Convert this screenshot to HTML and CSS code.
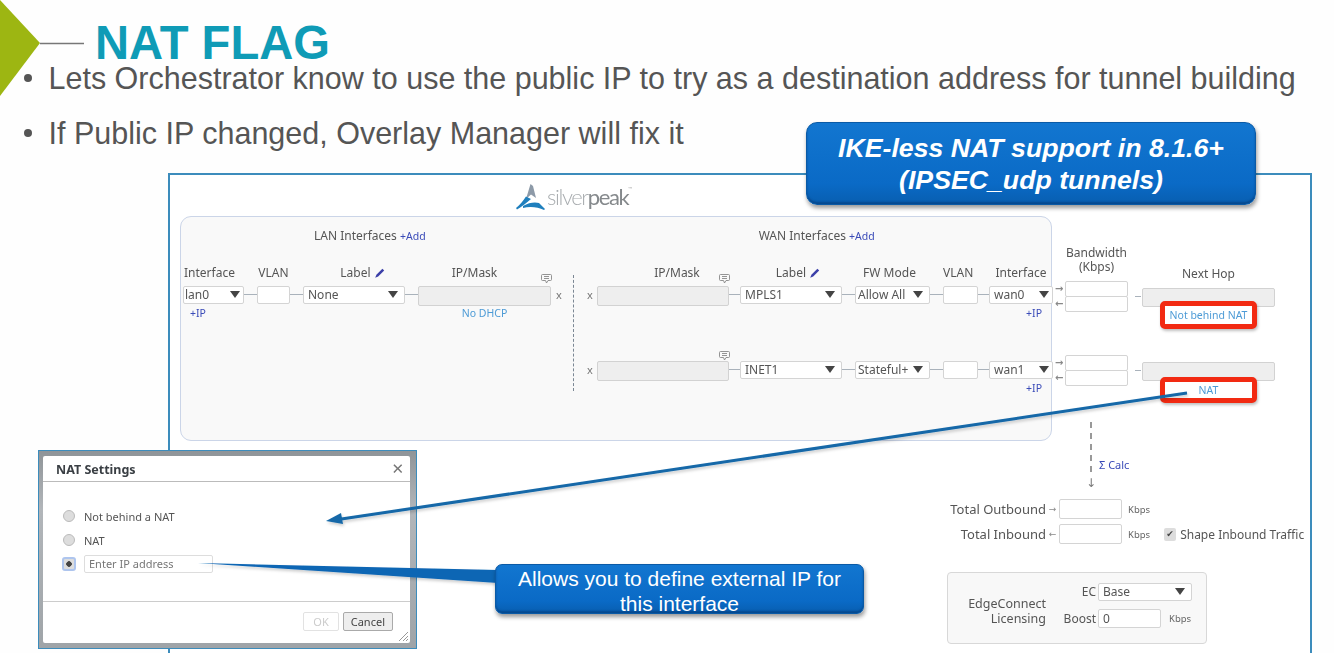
FILE: index.html
```html
<!DOCTYPE html>
<html lang="en">
<head>
<meta charset="utf-8">
<title>NAT Flag</title>
<link rel="stylesheet" href="styles.css">
</head>
<body>
<main class="slide">
  <svg class="marker" viewBox="0 0 90 96" width="90" height="96" aria-hidden="true">
    <polygon points="0,0 40,43 0,96" fill="#9db612"/>
    <line x1="40" y1="43.5" x2="84" y2="43.5" stroke="#777" stroke-width="1.4"/>
  </svg>
  <h1 class="title">NAT FLAG</h1>
  <ul class="bullets">
    <li>Lets Orchestrator know to use the public IP to try as a destination address for tunnel building</li>
    <li>If Public IP changed, Overlay Manager will fix it</li>
  </ul>

  <section class="panel">
    <div class="logo">
      <svg viewBox="0 0 30 26" width="30" height="26" aria-hidden="true">
        <path d="M14.500 0 L17 2 L20 14 L15 10.500 L10 15 Z" fill="#8d9aa8"/>
        <path d="M10 12.500 L15 15 C10 19 6 23 1 25.500 L0 24 C4 21 7 17 10 12.500 Z" fill="#1f7fbd"/>
        <path d="M7 22 C13 18 20 18 23 19 L29 25 L28 26 C22 23 14 22 7 24 Z" fill="#1f7fbd"/>
      </svg>
      <span class="logo-name"><span class="logo-light">silver</span><span class="logo-dark">peak</span><sup class="logo-tm">™</sup></span>
    </div>

    <div class="config">
      <div class="ifbox">
        <div class="iftitles">
          <span class="lan-title">LAN Interfaces <b class="add">+Add</b></span>
          <span class="wan-title">WAN Interfaces <b class="add">+Add</b></span>
        </div>

        <div class="ifrow labels">
          <span class="lb-if">Interface</span><i></i><span>VLAN</span><i></i>
          <span class="lb-label1">Label <svg class="pen" viewBox="0 0 10 10" width="12" height="12" aria-hidden="true"><path d="M1 9 L2 6.500 L7 1.500 L8.500 3 L3.500 8 Z" fill="#3b3fa8"/></svg></span><i></i>
          <span class="noted lb-ip1">IP/Mask<svg class="note" viewBox="0 0 11 10" width="11" height="10" aria-hidden="true"><path d="M1.500 .5 H9.500 Q10.500 .5 10.500 1.500 V5.500 Q10.500 6.500 9.500 6.500 H7 L5.500 9 L4.500 6.500 H1.500 Q.5 6.500 .5 5.500 V1.500 Q.5 .5 1.500 .5 Z M3 2.500 H8 M3 4.500 H8" fill="none" stroke="#888" stroke-width=".9"/></svg></span>
          <i></i><i></i><i></i>
          <span class="noted lb-ip2">IP/Mask<svg class="note" viewBox="0 0 11 10" width="11" height="10" aria-hidden="true"><path d="M1.500 .5 H9.500 Q10.500 .5 10.500 1.500 V5.500 Q10.500 6.500 9.500 6.500 H7 L5.500 9 L4.500 6.500 H1.500 Q.5 6.500 .5 5.500 V1.500 Q.5 .5 1.500 .5 Z M3 2.500 H8 M3 4.500 H8" fill="none" stroke="#888" stroke-width=".9"/></svg></span><i></i>
          <span class="lb-label2">Label <svg class="pen" viewBox="0 0 10 10" width="12" height="12" aria-hidden="true"><path d="M1 9 L2 6.500 L7 1.500 L8.500 3 L3.500 8 Z" fill="#3b3fa8"/></svg></span><i></i>
          <span class="lb-fw">FW Mode</span><i></i><span class="lb-vlan2">VLAN</span><i></i><span>Interface</span>
        </div>

        <div class="ifrow controls">
          <div class="sel tight edge">lan0</div><i class="conn"></i><div class="inp"></div><i class="conn"></i>
          <div class="sel">None</div><i class="conn"></i><div class="ro"></div>
          <span class="xl">x</span><i></i><span class="xr">x</span>
          <div class="ro"></div><i class="conn"></i>
          <div class="sel">MPLS1</div><i class="conn"></i><div class="sel narrow">Allow All</div><i class="conn"></i><div class="inp"></div><i class="conn"></i><div class="sel edge">wan0</div>
        </div>

        <div class="ifrow subs">
          <b class="plus-ip lan">+IP</b><i></i><i></i><i></i><i></i><i></i>
          <span class="nodhcp">No DHCP</span>
          <i></i><i></i><i></i><i></i><i></i><i></i><i></i><i></i><i></i><i></i><i></i>
          <b class="plus-ip wan">+IP</b>
        </div>

        <div class="ifrow noterow">
          <i></i><i></i><i></i><i></i><i></i><i></i><i></i><i></i><i></i><i></i>
          <span class="noted"><svg class="note" viewBox="0 0 11 10" width="11" height="10" aria-hidden="true"><path d="M1.500 .5 H9.500 Q10.500 .5 10.500 1.500 V5.500 Q10.500 6.500 9.500 6.500 H7 L5.500 9 L4.500 6.500 H1.500 Q.5 6.500 .5 5.500 V1.500 Q.5 .5 1.500 .5 Z M3 2.500 H8 M3 4.500 H8" fill="none" stroke="#888" stroke-width=".9"/></svg></span>
        </div>

        <div class="ifrow controls">
          <i></i><i></i><i></i><i></i><i></i><i></i><i></i><i></i><i></i>
          <span class="xr">x</span>
          <div class="ro"></div><i class="conn"></i>
          <div class="sel">INET1</div><i class="conn"></i><div class="sel narrow clip">Stateful+</div><i class="conn"></i><div class="inp"></div><i class="conn"></i><div class="sel edge">wan1</div>
        </div>

        <div class="ifrow subs">
          <i></i><i></i><i></i><i></i><i></i><i></i><i></i><i></i><i></i><i></i><i></i><i></i><i></i><i></i><i></i><i></i><i></i><i></i>
          <b class="plus-ip wan">+IP</b>
        </div>

        <div class="divider"></div>
      </div>

      <div class="wanside">
        <div class="wanhead">
          <span class="bw-label">Bandwidth<br>(Kbps)</span>
          <span class="nh-label">Next Hop</span>
        </div>

        <div class="wanrow">
          <div class="arrows"><span>→</span><span>←</span></div>
          <div class="bw"><div class="inp"></div><div class="inp"></div></div>
          <i class="dash"></i>
          <div class="nexthop">
            <div class="ro"></div>
            <div class="redbox first">Not behind NAT</div>
          </div>
        </div>

        <div class="wanrow second">
          <div class="arrows"><span>→</span><span>←</span></div>
          <div class="bw"><div class="inp"></div><div class="inp"></div></div>
          <i class="dash"></i>
          <div class="nexthop">
            <div class="ro"></div>
            <div class="redbox">NAT</div>
          </div>
        </div>

        <div class="calc">
          <div class="calc-line"><i class="dashed"></i><span class="arrowdown">↓</span></div>
          <b class="calc-link">Σ Calc</b>
        </div>
      </div>
    </div>

    <div class="totals">
      <div class="total-row">
        <span class="total-label">Total Outbound</span><span class="mini">→</span><div class="inp"></div><small>Kbps</small>
      </div>
      <div class="total-row">
        <span class="total-label">Total Inbound</span><span class="mini">←</span><div class="inp"></div><small>Kbps</small>
        <span class="check">✔</span><span class="shape">Shape Inbound Traffic</span>
      </div>
    </div>

    <div class="license">
      <div class="lic-name">EdgeConnect<br>Licensing</div>
      <div class="lic-fields">
        <div class="lic-row"><span class="lic-label">EC</span><div class="sel">Base</div></div>
        <div class="lic-row"><span class="lic-label">Boost</span><div class="inp">0</div><small>Kbps</small></div>
      </div>
    </div>
  </section>

  <aside class="dialog">
    <div class="dialog-inner">
      <header class="dialog-head"><strong>NAT Settings</strong><span class="close">✕</span></header>
      <div class="dialog-body">
        <label class="radio-row"><i class="radio"></i>Not behind a NAT</label>
        <label class="radio-row"><i class="radio"></i>NAT</label>
        <label class="radio-row"><i class="radio on"></i><span class="ipfield">Enter IP address</span></label>
      </div>
      <footer class="dialog-foot">
        <span class="btn off">OK</span><span class="btn">Cancel</span>
        <svg class="grip" viewBox="0 0 12 12" width="12" height="12" aria-hidden="true"><path d="M11 2 L2 11 M11 6 L6 11 M11 9 L9 11" stroke="#999" stroke-width="1"/></svg>
      </footer>
    </div>
  </aside>

  <svg class="leaders" viewBox="0 0 1334 653" width="1334" height="653" aria-hidden="true">
    <defs>
      <filter id="soft" x="-5%" y="-20%" width="110%" height="140%"><feDropShadow dx="1" dy="2" stdDeviation="1.500" flood-color="#000" flood-opacity=".2"/></filter>
    </defs>
    <g filter="url(#soft)">
      <line x1="1187" y1="393" x2="338" y2="519.500" stroke="#1468a8" stroke-width="3"/>
      <polygon points="326,521 341,513 343,524" fill="#1468a8"/>
      <polygon points="198,563 498,570 498,583" fill="#0f66b4"/>
    </g>
  </svg>

  <div class="callout top">IKE-less NAT support in 8.1.6+<br>(IPSEC_udp tunnels)</div>
  <div class="callout low">Allows you to define external IP for<br>this interface</div>
</main>
</body>
</html>
```
FILE: styles.css
```css
* { box-sizing: border-box; }
html, body { margin: 0; height: 100%; overflow: hidden; background: #fff; }

.slide {
  position: relative;
  width: 1334px;
  height: 653px;
  overflow: hidden;
  background: #fefefe;
  font-family: "Liberation Sans", Arial, sans-serif;
  padding: 23px 0 0 22px;
}

.marker { position: absolute; left: 0; top: 0; }

.title {
  margin: 0 0 0 73px;
  font-size: 47.200px;
  line-height: 40px;
  font-weight: 700;
  color: #0f9bb6;
}

.bullets {
  list-style: none;
  margin: 0;
  padding: 0;
  color: #555;
  font-size: 30.500px;
  line-height: 30px;
}
.bullets li { position: relative; padding-left: 26.500px; margin-bottom: 25px; white-space: nowrap; }
.bullets li::before {
  content: "";
  position: absolute;
  left: 2px;
  top: 11px;
  width: 8px;
  height: 8px;
  border-radius: 50%;
  background: #555;
}

/* ---------- embedded screenshot ---------- */
.panel {
  position: absolute;
  left: 168px;
  top: 173px;
  width: 1144px;
  height: 520px;
  border: 2px solid #3c8cbc;
  background: #fff;
  font-family: "Noto Sans", "DejaVu Sans", sans-serif;
  font-size: 12px;
  color: #555;
  filter: blur(.45px);
}

.logo { display: flex; align-items: flex-start; gap: 1px; height: 41px; padding: 9px 0 0 346px; }
.logo-name { font-family: Lato, sans-serif; font-size: 22px; line-height: 25px; letter-spacing: -1.400px; font-weight: 300; }
.logo-light { color: #a9adb0; }
.logo-dark { color: #85898c; font-weight: 400; }
.logo-tm { font-size: 6px; vertical-align: 14px; line-height: 0; color: #999; letter-spacing: 0; }

.config { display: flex; align-items: flex-start; gap: 3px; padding-left: 10px; }

.ifbox {
  position: relative;
  width: 872px;
  height: 225px;
  padding: 11px 0 0 2px;
  border: 1px solid #cbd5e8;
  border-radius: 11px;
  background: #f9f9f9;
}

.iftitles { display: flex; height: 16px; line-height: 16px; margin-bottom: 20px; }
.lan-title { margin-left: 131px; }
.wan-title { margin-left: 333px; }
.add { font-weight: 400; font-size: 10.500px; color: #3a4bb8; }

.ifrow {
  display: grid;
  grid-template-columns: 61px 13px 33px 13px 102px 13px 133px 22px 1px 23px 132px 11px 102px 13px 75px 13px 35px 11px 64px;
}
.labels { height: 22px; line-height: 18px; text-align: center; }
.labels span { white-space: nowrap; }
.lb-if { text-align: left; padding-left: 1px; }
.lb-label1 { padding-left: 18px; }
.lb-label2 { padding-left: 15px; }
.lb-ip1 { padding-right: 20px; }
.lb-ip2 { padding-left: 28px; }
.lb-fw { padding-right: 6px; }
.lb-vlan2 { padding-right: 8px; }
.pen { vertical-align: -2px; }
.noted { position: relative; display: block; }
.note { position: absolute; right: -1px; top: 10px; }

.controls { height: 20px; align-items: start; }
.subs { height: 14px; line-height: 14px; font-size: 10.500px; }
.plus-ip { font-weight: 400; color: #3a4bb8; }
.plus-ip.lan { padding-left: 7px; }
.plus-ip.wan { text-align: right; padding-right: 11px; white-space: nowrap; }
.nodhcp { text-align: center; color: #4d9bd6; }
.noterow { height: 41px; }
.noterow .note { top: 31px; }

.sel, .inp, .ro { height: 18px; border: 1px solid #d4d4d4; border-radius: 2px; background: #fff; }
.sel {
  position: relative;
  line-height: 16px;
  padding-left: 4px;
  white-space: nowrap;
  overflow: hidden;
}
.sel::after {
  content: "";
  position: absolute;
  right: 6px;
  top: 4px;
  border: 5px solid transparent;
  border-top: 7px solid #444;
  border-bottom: 0;
}
.tight { padding-left: 1px; }
.narrow { padding-left: 2px; }
.edge::after { right: 3px; }
.clip { padding-right: 22px; }
.ro { height: 20px; background: #eee; border-color: #d2d2d2; }
.conn { display: block; height: 1px; margin-top: 8px; background: #a9b2bb; }
.xl, .xr { line-height: 17px; color: #777; font-size: 11px; text-align: center; }
.xl { padding-right: 6px; }
.xr { padding-left: 9px; }

.divider {
  position: absolute;
  left: 392px;
  top: 58px;
  height: 116px;
  border-left: 1px dashed #7b8794;
}

.wanside { width: 240px; }
.wanhead { display: flex; height: 65px; align-items: flex-end; }
.bw-label { width: 63px; margin-left: 10px; padding-bottom: 7px; line-height: 14px; text-align: center; white-space: nowrap; }
.nh-label { width: 133px; margin-left: 14px; line-height: 14px; text-align: center; }

.wanrow { display: flex; align-items: flex-start; height: 46px; }
.wanrow.second { margin-top: 28px; height: 48px; }
.arrows { display: flex; flex-direction: column; width: 10px; font: 700 10px/15px "DejaVu Sans", sans-serif; color: #888; }
.bw { width: 63px; }
.bw .inp { height: 16px; }
.bw .inp + .inp { margin-top: -1px; }
.dash { display: block; width: 6px; height: 1px; margin: 15px 1px 0 7px; background: #a9b2bb; }
.nexthop { width: 133px; margin-top: 7px; display: flex; flex-direction: column; align-items: center; }
.nexthop .ro { width: 100%; height: 19px; }
.redbox {
  position: relative;
  width: 97px;
  height: 26px;
  margin-top: -4px;
  border: 5px solid #f22a12;
  border-radius: 5px;
  background: #fff;
  box-shadow: 1px 2px 3px rgba(0,0,0,.25);
  font-size: 10.500px;
  line-height: 16px;
  text-align: center;
  color: #4d9bd6;
  white-space: nowrap;
}
.redbox.first { height: 28px; margin-top: -6px; line-height: 18px; }

.calc { display: flex; margin: 19px 0 0 30px; height: 68px; }
.calc-line { display: flex; flex-direction: column; align-items: center; width: 12px; }
.dashed { display: block; height: 50px; border-left: 2px dashed #999; }
.arrowdown { font: 12px/14px "DejaVu Sans", sans-serif; color: #777; margin-top: 4px; }
.calc-link { font-weight: 400; font-size: 11px; color: #3a4bb8; margin: 36px 0 0 2px; line-height: 14px; white-space: nowrap; }

.totals { margin: 9px 0 0 778px; }
.total-row { display: flex; align-items: center; height: 20px; margin-bottom: 5px; white-space: nowrap; }
.total-label { width: 98px; text-align: right; font-size: 13px; }
.mini { width: 13px; font: 9px/14px "DejaVu Sans", sans-serif; text-align: center; color: #888; }
.total-row .inp { width: 63px; height: 20px; }
small { font-size: 9.500px; margin-left: 6px; color: #666; }
.check {
  width: 12px;
  height: 13px;
  margin: 0 4px 0 14px;
  border-radius: 2px;
  background: #ddd;
  font: 9px/13px "DejaVu Sans", sans-serif;
  color: #444;
  text-align: center;
}

.license {
  display: flex;
  width: 260px;
  height: 72px;
  margin: 28px 0 0 777px;
  border: 1px solid #d8d8d8;
  border-radius: 4px;
  background: #f8f8f8;
}
.lic-name { width: 98px; padding-top: 23px; line-height: 15px; text-align: right; font-size: 12.500px; white-space: nowrap; }
.lic-fields { padding-top: 9px; }
.lic-row { display: flex; align-items: center; height: 19px; margin-bottom: 8px; }
.lic-label { width: 52px; text-align: right; padding-right: 2px; }
.lic-row .sel { width: 94px; }
.lic-row .inp { width: 63px; height: 19px; line-height: 17px; padding-left: 4px; }
.lic-row small { margin-left: 8px; }

/* ---------- dialog overlay ---------- */
.dialog {
  position: absolute;
  left: 38px;
  top: 450px;
  width: 379px;
  height: 199px;
  padding: 5px 6px 5px 4px;
  border: 1px solid #3c8cbc;
  background: linear-gradient(#8f9498, #b2b6ba 30%, #9fa4a8);
  font-family: "Noto Sans", "DejaVu Sans", sans-serif;
  font-size: 11px;
  color: #555;
  filter: blur(.4px);
}
.dialog-inner { display: flex; flex-direction: column; height: 100%; background: #fff; border-radius: 2px; }
.dialog-head {
  display: flex;
  justify-content: space-between;
  align-items: center;
  height: 26px;
  padding: 2px 6px 0 13px;
  border-bottom: 1px solid #bbb;
  color: #3a3f44;
  font-size: 12.500px;
}
.close { font: 700 15px/1 "DejaVu Sans", sans-serif; color: #777; }
.dialog-body { flex: 1; padding: 22px 0 0 20px; border-bottom: 1px solid #ccc; }
.radio-row { display: flex; align-items: center; height: 24px; gap: 9px; }
.radio {
  display: block;
  width: 12px;
  height: 12px;
  border: 1px solid #bbb;
  border-radius: 50%;
  background: #ddd;
}
.radio.on {
  width: 14px;
  height: 14px;
  margin: 0 0 0 -1px;
  border: 2px solid #aec5ee;
  border-radius: 3px;
  background: radial-gradient(circle, #444 0 2.500px, #ddd 3px);
}
.ipfield { width: 129px; height: 18px; margin-left: -1px; padding-left: 4px; line-height: 16px; border: 1px solid #ddd; border-radius: 2px; color: #777; }
.dialog-foot { position: relative; display: flex; justify-content: flex-end; gap: 4px; height: 41px; padding: 10px 17px 0 0; }
.btn { height: 19px; padding: 0 7px; line-height: 17px; border: 1px solid #aaa; border-radius: 2px; background: #eee; color: #444; }
.btn.off { padding: 0 9px; border-color: #e2e2e2; background: #fff; color: #ccc; }
.grip { position: absolute; right: 1px; bottom: 1px; }

/* ---------- leader lines and callouts ---------- */
.leaders { position: absolute; left: 0; top: 0; pointer-events: none; }

.callout {
  position: absolute;
  border-radius: 11px;
  background: linear-gradient(#1276d0, #0a6ac6 75%, #085eb0);
  border: 1px solid #0a5aa6;
  box-shadow: inset 0 -2px 2px rgba(0,40,90,.4), 1px 3px 4px rgba(0,0,0,.4);
  color: #fff;
  text-align: center;
  font-family: "Liberation Sans", Arial, sans-serif;
}
.callout.top {
  left: 806px;
  top: 122px;
  width: 450px;
  height: 83px;
  padding-top: 9px;
  font-size: 26.700px;
  line-height: 32px;
  font-weight: 700;
  font-style: italic;
}
.callout.low {
  left: 495px;
  top: 564px;
  width: 369px;
  height: 50px;
  border-radius: 7px;
  font-size: 21px;
  line-height: 25px;
  padding-top: 1px;
}
```
